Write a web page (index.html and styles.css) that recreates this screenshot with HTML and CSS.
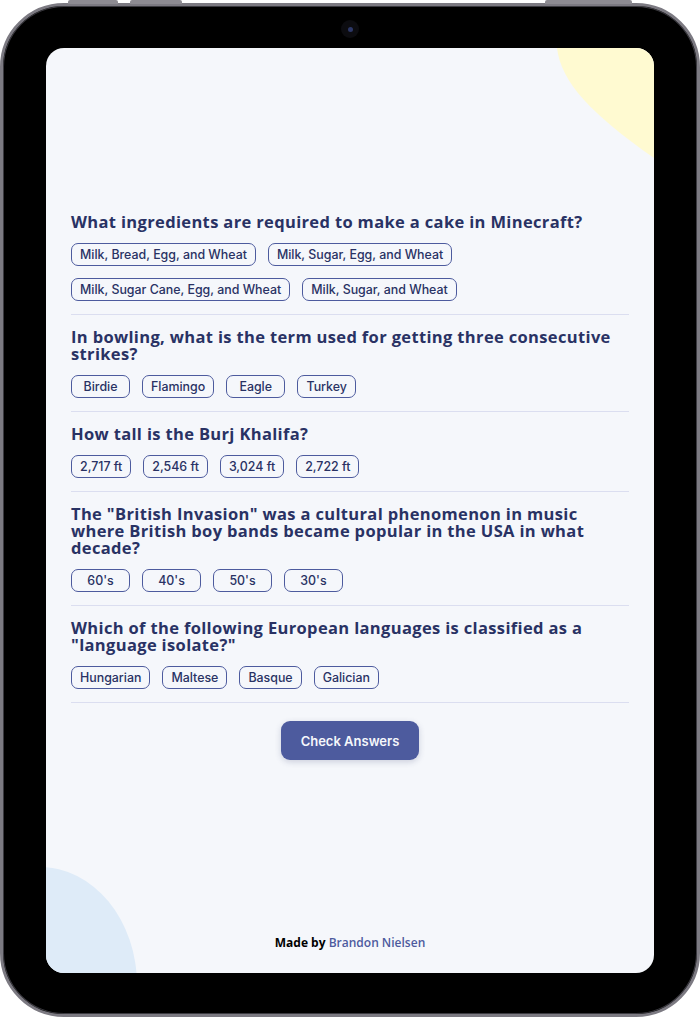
FILE: index.html
```html
<html lang="en">

<head>
    <meta charset="UTF-8">
    <meta name="viewport" content="width=device-width, initial-scale=1.0">
    <title>Quizzical</title>
    <link rel="stylesheet" href="styles.css">
</head>

<body>
    <div class="device">
        <span class="side-btn btn-a"></span>
        <span class="side-btn btn-b"></span>
        <span class="side-btn btn-c"></span>
        <div class="camera"><span></span></div>

        <div class="screen">
            <svg class="blob blob-yellow" width="97" height="110" viewBox="0 0 97 110">
                <path d="M0 0 C4 34 34 66 97 110 L97 0 Z" fill="#fffad1" />
            </svg>
            <svg class="blob blob-blue" width="92" height="106" viewBox="0 0 92 106">
                <ellipse cx="-6" cy="118" rx="97" ry="118" fill="#deebf8" />
            </svg>

            <main class="quiz">
                <section class="question">
                    <h2>What ingredients are required to make a cake in Minecraft?</h2>
                    <div class="answers">
                        <button>Milk, Bread, Egg, and Wheat</button>
                        <button>Milk, Sugar, Egg, and Wheat</button>
                        <button>Milk, Sugar Cane, Egg, and Wheat</button>
                        <button>Milk, Sugar, and Wheat</button>
                    </div>
                </section>
                <section class="question">
                    <h2>In bowling, what is the term used for getting three consecutive strikes?</h2>
                    <div class="answers">
                        <button>Birdie</button>
                        <button>Flamingo</button>
                        <button>Eagle</button>
                        <button>Turkey</button>
                    </div>
                </section>
                <section class="question">
                    <h2>How tall is the Burj Khalifa?</h2>
                    <div class="answers">
                        <button>2,717 ft</button>
                        <button>2,546 ft</button>
                        <button>3,024 ft</button>
                        <button>2,722 ft</button>
                    </div>
                </section>
                <section class="question">
                    <h2>The "British Invasion" was a cultural phenomenon in music where British boy bands became popular in the USA in what decade?</h2>
                    <div class="answers">
                        <button>60's</button>
                        <button>40's</button>
                        <button>50's</button>
                        <button>30's</button>
                    </div>
                </section>
                <section class="question">
                    <h2>Which of the following European languages is classified as a "language isolate?"</h2>
                    <div class="answers">
                        <button>Hungarian</button>
                        <button>Maltese</button>
                        <button>Basque</button>
                        <button>Galician</button>
                    </div>
                </section>
                <div class="check-row">
                    <button class="check-btn">Check Answers</button>
                </div>
            </main>

            <footer class="footer">Made by <a href="#">Brandon Nielsen</a></footer>
        </div>
    </div>
</body>

</html>
```

FILE: styles.css
```css
body {
    margin: 0;
    background: #ffffff;
}

.device {
    position: relative;
    box-sizing: border-box;
    width: 700px;
    height: 1014px;
    margin-top: 3px;
    padding: 42px 43px 41px 43px;
    border: 3px solid #7c7a82;
    border-radius: 64px;
    background: #000000;
    box-shadow: inset 0 0 0 1px #3b3a40;
}

.side-btn {
    position: absolute;
    top: -6px;
    height: 4px;
    border-radius: 2px 2px 0 0;
    background: #8d8b92;
}

.btn-a {
    left: 65px;
    width: 50px;
}

.btn-b {
    left: 127px;
    width: 52px;
}

.btn-c {
    left: 542px;
    width: 87px;
}

.camera {
    position: absolute;
    top: 14px;
    left: 338px;
    width: 18px;
    height: 18px;
    border-radius: 50%;
    background: #0c0c10;
    display: flex;
    align-items: center;
    justify-content: center;
}

.camera span {
    width: 5px;
    height: 5px;
    border-radius: 50%;
    background: #2d3868;
}

.screen {
    position: relative;
    height: 100%;
    border-radius: 18px;
    overflow: hidden;
    background: #f5f7fb;
    display: flex;
    flex-direction: column;
}

.blob {
    position: absolute;
}

.blob-yellow {
    top: 0;
    right: 0;
}

.blob-blue {
    bottom: 0;
    left: 0;
}

.quiz {
    position: relative;
    padding: 152px 25px 0 25px;
}

.question {
    padding: 13px 0 13px 0;
    border-bottom: 1px solid #dbdef0;
}

.question h2 {
    margin: 0 0 13px 0;
    font-family: "Open Sans", sans-serif;
    font-weight: 700;
    font-size: 16.5px;
    letter-spacing: 0.35px;
    line-height: 17px;
    color: #293264;
}

.answers {
    display: flex;
    flex-wrap: wrap;
    gap: 12px;
}

.answers button {
    min-width: 59px;
    height: 23px;
    padding: 0 8px;
    border: 1px solid #4d5b9e;
    border-radius: 7px;
    background: transparent;
    font-family: Inter, sans-serif;
    font-weight: 500;
    font-size: 12.4px;
    color: #293264;
}

.check-row {
    display: flex;
    justify-content: center;
    padding-top: 18px;
}

.check-btn {
    width: 138px;
    height: 39px;
    border: none;
    border-radius: 9px;
    background: #4d5b9e;
    color: #f5f7fb;
    font-family: Inter, sans-serif;
    font-weight: 600;
    font-size: 13px;
    box-shadow: 0 2px 6px rgba(41, 50, 100, 0.2);
}

.footer {
    position: relative;
    margin-top: auto;
    padding-bottom: 22px;
    text-align: center;
    font-family: "Open Sans", sans-serif;
    font-weight: 700;
    font-size: 12px;
    line-height: 16px;
    color: #000000;
}

.footer a {
    color: #4d5b9e;
    font-weight: 600;
    text-decoration: none;
}
```
